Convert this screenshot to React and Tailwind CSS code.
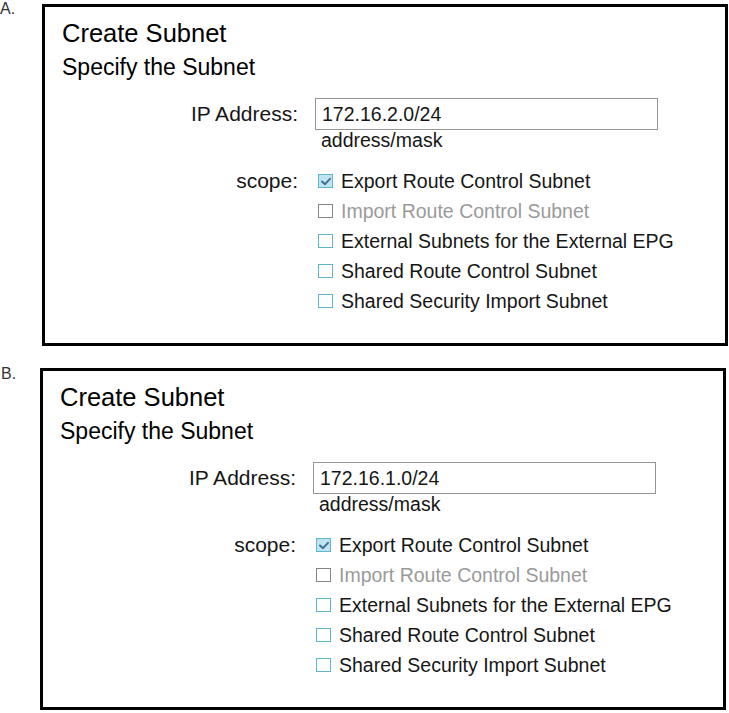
import React from "react";

function Checkbox({ state }) {
  if (state === "checked") {
    return (
      <div className="w-[15px] h-[14px] border-[1.5px] border-[#5fb6cf] bg-[#bfe3ef] flex items-center justify-center shrink-0">
        <svg width="12" height="11" viewBox="0 0 12 11">
          <path d="M2 5.5 L5 8.2 L10 2.8" fill="none" stroke="#3d6f94" strokeWidth="1.9" strokeLinecap="round" strokeLinejoin="round" />
        </svg>
      </div>
    );
  }
  if (state === "disabled") {
    return <div className="w-[15px] h-[14px] border-[1.5px] border-[#858585] bg-white shrink-0" />;
  }
  return <div className="w-[15px] h-[14px] border-[1.5px] border-[#5fb6cf] bg-white shrink-0" />;
}

function Panel({ ip }) {
  const opts = [
    { t: "Export Route Control Subnet", s: "checked" },
    { t: "Import Route Control Subnet", s: "disabled" },
    { t: "External Subnets for the External EPG", s: "unchecked" },
    { t: "Shared Route Control Subnet", s: "unchecked" },
    { t: "Shared Security Import Subnet", s: "unchecked" },
  ];
  return (
    <div className="w-[686px] h-[342px] border-[3px] border-black bg-white pl-[17px] pt-[11px] text-[#161616]">
      <div className="text-[25.5px] leading-[30px] text-black">Create Subnet</div>
      <div className="mt-[5px] text-[23px] leading-[28px] text-black">Specify the Subnet</div>
      <div className="mt-[17px] flex">
        <div className="w-[236px] h-[32px] flex items-center justify-end text-[21px] leading-[22px]">IP Address:</div>
        <div className="ml-[17px] w-[343px] h-[32px] border border-[#959595] pl-[6px] flex items-center text-[19.5px] leading-[22px]">
          {ip}
        </div>
      </div>
      <div className="flex">
        <div className="w-[236px]" />
        <div className="ml-[17px] pl-[6px] text-[19.5px] leading-[18px] pt-[1px]">address/mask</div>
      </div>
      <div className="mt-[17px] flex">
        <div className="w-[236px] text-right text-[21px] leading-[30px]">scope:</div>
        <div className="ml-[17px] pl-[3px] flex flex-col">
          {opts.map((o) => (
            <div key={o.t} className="h-[30px] flex items-center gap-[8px]">
              <Checkbox state={o.s} />
              <span className={"text-[19.5px] leading-[22px] " + (o.s === "disabled" ? "text-[#9a9a9a]" : "text-[#161616]")}>
                {o.t}
              </span>
            </div>
          ))}
        </div>
      </div>
    </div>
  );
}

export default function App() {
  return (
    <div
      className="w-[729px] h-[713px] bg-white pt-[4px]"
      style={{ fontFamily: '"Liberation Sans", Arial, sans-serif' }}
    >
      <div className="flex items-start">
        <div className="w-[42px] -mt-[3px] text-[16px] leading-none text-[#333]">A.</div>
        <Panel ip="172.16.2.0/24" />
      </div>
      <div className="mt-[22px] flex items-start">
        <div className="w-[40px] -mt-[2px] pl-[1px] text-[16px] leading-none text-[#333]">B.</div>
        <Panel ip="172.16.1.0/24" />
      </div>
    </div>
  );
}
